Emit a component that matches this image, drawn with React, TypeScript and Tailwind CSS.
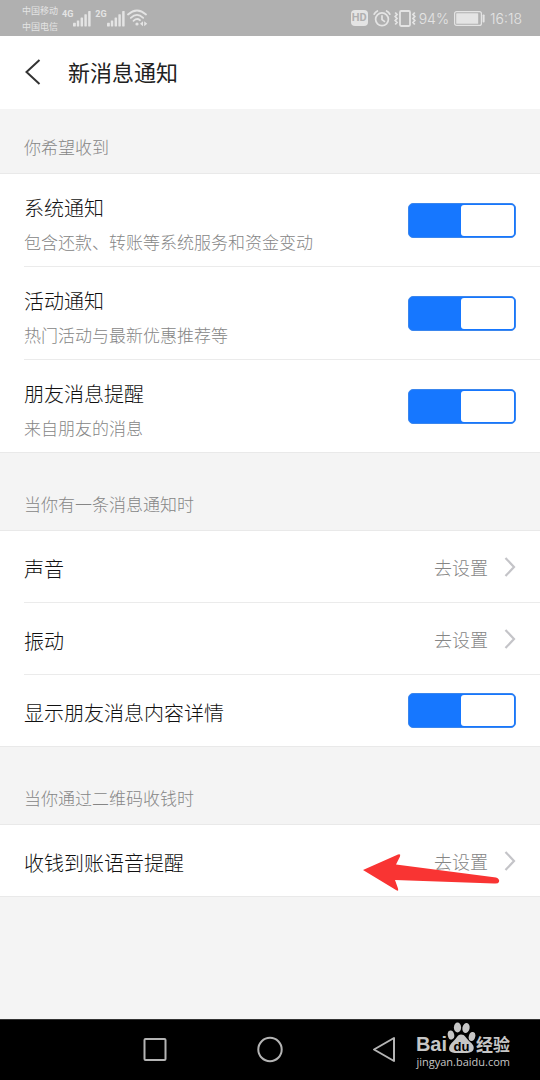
import { ReactNode } from "react";

const CJK = "font-['Noto_Sans_CJK_SC',sans-serif]";

const SignalBars = () => (
    <svg width="18" height="17" viewBox="0 0 19 17" fill="currentColor" aria-hidden="true">
        <rect x="0" y="13" width="3" height="4" rx="0.5" />
        <rect x="4" y="10.5" width="2.6" height="6.5" rx="0.5" />
        <rect x="8" y="7.5" width="2.6" height="9.5" rx="0.5" />
        <rect x="12" y="4" width="2.6" height="13" rx="0.5" />
        <rect x="16" y="0.5" width="2.6" height="16.5" rx="0.5" />
    </svg>
);

const WifiIcon = () => (
    <svg width="21" height="18" viewBox="0 0 21 18" fill="none" stroke="currentColor" strokeWidth="1.8" strokeLinecap="round" aria-hidden="true">
        <path d="M1 5.5Q10 -2.5 19 5.5" />
        <path d="M3.8 8.8Q10 3 16.2 8.8" />
        <path d="M6.5 11.8Q10 8.6 13 11.2" />
        <circle cx="10" cy="15" r="1.6" fill="currentColor" stroke="none" />
        <path d="M16 12.2v5l-3-2.5zM17.2 12.2v5l3-2.5z" fill="currentColor" stroke="none" />
    </svg>
);

const AlarmIcon = () => (
    <svg width="18" height="17" viewBox="0 0 18 17" fill="none" stroke="currentColor" strokeWidth="1.7" strokeLinecap="round" aria-hidden="true">
        <circle cx="9" cy="9.3" r="6.4" />
        <path d="M9 5.8v3.8l2.4 1.8M1.2 4.2Q2.2 2 4.4 1M16.8 4.2Q15.8 2 13.6 1" />
    </svg>
);

const VibrateIcon = () => (
    <svg width="22" height="17" viewBox="0 0 22 17" fill="none" stroke="currentColor" strokeWidth="1.8" aria-hidden="true">
        <rect x="6" y="1" width="10" height="15" rx="1.2" />
        <path d="M1.2 2.5l1.8 2-1.8 2 1.8 2-1.8 2 1.8 2-1.8 2M20.8 2.5l-1.8 2 1.8 2-1.8 2 1.8 2-1.8 2 1.8 2" />
    </svg>
);

const BatteryIcon = () => (
    <svg width="31" height="15" viewBox="0 0 31 15" aria-hidden="true">
        <rect x="0.6" y="0.6" width="26.8" height="13.8" rx="2" fill="none" stroke="currentColor" strokeWidth="1.2" />
        <rect x="2.2" y="2.2" width="22" height="10.6" rx="0.6" fill="currentColor" />
        <rect x="28.6" y="3.5" width="2" height="8" rx="0.8" fill="currentColor" />
    </svg>
);

const StatusBar = () => (
    <div className="flex h-9 items-center justify-between bg-[#b0b0b0] pl-[22px] pr-[18px] text-[#e4e4e4]">
        <div className="flex items-center">
            <div className="pt-0.5 text-[9px] font-normal leading-4">
                <p>中国移动</p>
                <p>中国电信</p>
            </div>
            <span className="ml-1 mb-2 font-['Roboto',sans-serif] text-[9px] font-bold leading-3">4G</span>
            <SignalBars />
            <span className="ml-1 mb-2 font-['Roboto',sans-serif] text-[9px] font-bold leading-3">2G</span>
            <SignalBars />
            <span className="ml-0.5">
                <WifiIcon />
            </span>
        </div>
        <div className="flex items-center gap-[3px] font-['Inter',sans-serif] text-[14px] font-light">
            <span className="mr-0.5 rounded-sm bg-[#e4e4e4] px-px font-['Roboto',sans-serif] text-[11px] font-bold leading-4 text-[#b0b0b0]">
                HD
            </span>
            <AlarmIcon />
            <VibrateIcon />
            <span>94%</span>
            <span className="mx-0.5">
                <BatteryIcon />
            </span>
            <span>16:18</span>
        </div>
    </div>
);

const Header = () => (
    <header className="flex items-center bg-white px-6 pb-5 pt-[19px]">
        <button type="button" aria-label="返回" className="py-1">
            <svg width="18" height="26" viewBox="0 0 18 26" fill="none" stroke="#333" strokeWidth="2" aria-hidden="true">
                <path d="M15.5 1L2.5 13L15.5 25" />
            </svg>
        </button>
        <h1 className="ml-[26px] pb-0.5 text-[22px] font-normal leading-7 text-[#222]">新消息通知</h1>
    </header>
);

const Toggle = ({ id }: { id: string }) => (
    <input
        id={id}
        type="checkbox"
        role="switch"
        defaultChecked
        className="flex h-[35px] w-[108px] shrink-0 cursor-pointer appearance-none rounded-[5px] border border-gray-300 bg-gray-300 p-px
                   before:h-full before:w-[53px] before:rounded-[3px] before:bg-white before:content-['']
                   checked:justify-end checked:border-[#3a86ee] checked:bg-[#1677ff]"
    />
);

const Row = ({ children }: { children: ReactNode }) => (
    <li className="flex items-center justify-between border-b border-[#ebebeb] pr-6 last:border-b-0">{children}</li>
);

interface ToggleRowProps {
    id: string;
    title: string;
    detail?: string;
}

const ToggleRow = ({ id, title, detail }: ToggleRowProps) => (
    <Row>
        <label htmlFor={id} className={detail ? "flex flex-col gap-2 pb-3 pt-5" : "pb-[19px] pt-6"}>
            <span className="block text-[20px] leading-7 text-[#111]">{title}</span>
            {detail && <span className="block text-[17px] leading-6 text-[#868686]">{detail}</span>}
        </label>
        <Toggle id={id} />
    </Row>
);

const LinkRow = ({ title }: { title: string }) => (
    <Row>
        <a href="#settings" className="flex flex-1 items-center justify-between">
            <span className="pb-[19px] pt-6 text-[20px] leading-7 text-[#111]">{title}</span>
            <span className="flex items-center gap-4 text-[18px] leading-6 text-[#868686]">
                <span>去设置</span>
                <svg width="12" height="20" viewBox="0 0 12 20" fill="none" stroke="#c4c4c8" strokeWidth="2.2" aria-hidden="true">
                    <path d="M1.5 1L10 10L1.5 19" />
                </svg>
            </span>
        </a>
    </Row>
);

interface SectionProps {
    title: string;
    first?: boolean;
    overlay?: ReactNode;
    children: ReactNode;
}

const Section = ({ title, first, overlay, children }: SectionProps) => (
    <section>
        <h2 className={`px-6 pb-[14px] text-[17px] leading-6 text-[#868686] ${first ? "pt-[26px]" : "pt-[39px]"}`}>
            {title}
        </h2>
        <div className="relative border-y border-[#e9e9e9] bg-white pl-6">
            <ul>{children}</ul>
            {overlay}
        </div>
    </section>
);

const PointerArrow = () => (
    <svg className="pointer-events-none absolute right-10 top-7 z-10" width="138" height="40" viewBox="0 0 138 40" aria-hidden="true">
        <path d="M1 17L36 1.500Q39 0.500 38 3.500L34 11.500L134 24.500Q138 26 137 29Q136 31 132 30.500L33 27L36 35.500Q37 39 34 37Z" fill="#f93433" />
    </svg>
);

const PawIcon = () => (
    <svg width="29" height="32" viewBox="0 0 29 32" fill="#c6c6c6" aria-hidden="true">
        <ellipse cx="4" cy="13" rx="3.2" ry="4.6" transform="rotate(-12 4 13)" />
        <ellipse cx="10.5" cy="5.5" rx="3.6" ry="5" />
        <ellipse cx="19" cy="6" rx="3.6" ry="5" transform="rotate(12 19 6)" />
        <ellipse cx="25" cy="14.5" rx="3.2" ry="4.6" transform="rotate(15 25 14.5)" />
        <path d="M14 12.5C18 12.5 19 16 22 19C26 22 28 25 26 28.500C24 31.500 19 31 14 31C9 31 4 31.500 2.500 28.500C1 25 4 21.500 7 18.500C10 16 10.500 12.500 14 12.500Z" />
        <text x="14.500" y="28.500" textAnchor="middle" fontSize="13" fontWeight="700" fontFamily="Liberation Sans, sans-serif" fill="#000">
            du
        </text>
    </svg>
);

const Watermark = () => (
    <div className="absolute bottom-2.5 right-[30px] flex flex-col items-end text-[#c6c6c6]">
        <div className="flex items-end">
            <span className="font-['Liberation_Sans',sans-serif] text-[20px] font-bold leading-5">Bai</span>
            <PawIcon />
            <span className="text-[17px] font-bold leading-5">经验</span>
        </div>
        <p className="font-['Open_Sans',sans-serif] text-[11px] font-normal leading-4">jingyan.baidu.com</p>
    </div>
);

const NavBar = () => (
    <nav className="relative mt-auto flex items-center justify-center gap-[89px] border-t border-[#333] bg-black py-4 text-[#b4b4b4]">
        <button type="button" aria-label="最近任务">
            <svg width="26" height="28" viewBox="0 0 26 28" fill="none" stroke="currentColor" strokeWidth="2" aria-hidden="true">
                <rect x="2.500" y="3" width="21" height="21" rx="1" />
            </svg>
        </button>
        <button type="button" aria-label="主屏幕">
            <svg width="26" height="28" viewBox="0 0 26 28" fill="none" stroke="currentColor" strokeWidth="2" aria-hidden="true">
                <circle cx="13" cy="13.500" r="11.700" />
            </svg>
        </button>
        <button type="button" aria-label="后退">
            <svg width="26" height="28" viewBox="0 0 26 28" fill="none" stroke="currentColor" strokeWidth="2" strokeLinejoin="round" aria-hidden="true">
                <path d="M22 2V25L2 13.500Z" />
            </svg>
        </button>
        <Watermark />
    </nav>
);

const App = () => (
    <div className={`flex min-h-screen flex-col bg-[#f4f4f4] font-light ${CJK}`}>
        <StatusBar />
        <Header />
        <main>
            <Section title="你希望收到" first>
                <ToggleRow id="system" title="系统通知" detail="包含还款、转账等系统服务和资金变动" />
                <ToggleRow id="activity" title="活动通知" detail="热门活动与最新优惠推荐等" />
                <ToggleRow id="friends" title="朋友消息提醒" detail="来自朋友的消息" />
            </Section>
            <Section title="当你有一条消息通知时">
                <LinkRow title="声音" />
                <LinkRow title="振动" />
                <ToggleRow id="preview" title="显示朋友消息内容详情" />
            </Section>
            <Section title="当你通过二维码收钱时" overlay={<PointerArrow />}>
                <LinkRow title="收钱到账语音提醒" />
            </Section>
        </main>
        <NavBar />
    </div>
);

export default App;
